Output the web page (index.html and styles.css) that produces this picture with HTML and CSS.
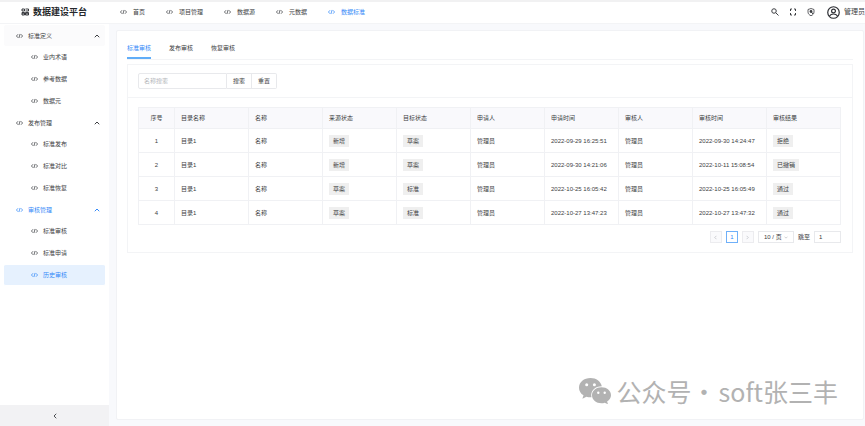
FILE: index.html
```html
<!DOCTYPE html>
<html lang="zh-CN">
<head>
<meta charset="utf-8">
<meta name="viewport" content="width=device-width, initial-scale=1">
<title>数据建设平台</title>
<link rel="stylesheet" href="styles.css">
</head>
<body>
<svg class="sprite" aria-hidden="true">
  <symbol id="code" viewBox="0 0 24 20"><path d="M7 4 1.500 10 7 16M17 4l5.500 6L17 16M14 3l-4 14" fill="none" stroke="currentColor" stroke-width="2.600"/></symbol>
  <symbol id="up" viewBox="0 0 12 8"><path d="M1.500 6.500 6 2l4.500 4.500" fill="none" stroke="currentColor" stroke-width="2"/></symbol>
  <symbol id="left" viewBox="0 0 8 12"><path d="M6.500 1.500 2 6l4.500 4.500" fill="none" stroke="currentColor" stroke-width="1.800"/></symbol>
  <symbol id="right" viewBox="0 0 8 12"><path d="M1.500 1.500 6 6l-4.500 4.500" fill="none" stroke="currentColor" stroke-width="1.800"/></symbol>
</svg>
<header class="header">
  <div class="brand">
    <svg class="brand-icon" viewBox="0 0 16 16" aria-hidden="true"><g fill="none" stroke="currentColor" stroke-width="1.800"><path d="M2 2h5v4H2zM9 2h6M9 6h6V2M2 9h5v5H2zM9 9h6v5H9zM2 11.500h5M9 11.500h6"/></g></svg>
    <h1 class="brand-name">数据建设平台</h1>
  </div>
  <nav class="nav" aria-label="主导航">
    <a href="#"><svg class="code"><use href="#code"/></svg>首页</a>
    <a href="#"><svg class="code"><use href="#code"/></svg>项目管理</a>
    <a href="#"><svg class="code"><use href="#code"/></svg>数据源</a>
    <a href="#"><svg class="code"><use href="#code"/></svg>元数据</a>
    <a href="#" class="active"><svg class="code"><use href="#code"/></svg>数据标准</a>
  </nav>
  <div class="tools">
    <button type="button" class="tool" aria-label="搜索"><svg viewBox="0 0 16 16"><g fill="none" stroke="currentColor" stroke-width="2"><circle cx="6" cy="6" r="4.500"/><path d="m9.500 9.500 5.500 5.500"/></g></svg></button>
    <button type="button" class="tool" aria-label="全屏"><svg viewBox="0 0 16 16"><path d="M3 6V2h3M10 2h3v4M13 10v4h-3M6 14H3v-4" fill="none" stroke="currentColor" stroke-width="2"/></svg></button>
    <button type="button" class="tool" aria-label="安全"><svg viewBox="0 0 16 16"><path d="M8 1 2 3v5c0 3.500 2.500 6 6 7.500 3.500-1.500 6-4 6-7.500V3z" fill="none" stroke="currentColor" stroke-width="1.600"/><circle cx="8" cy="7" r="2.800" fill="currentColor"/><path d="m8 7 4 5" stroke="currentColor" stroke-width="2"/></svg></button>
    <button type="button" class="user"><svg viewBox="0 0 26 26" aria-hidden="true"><g fill="none" stroke="currentColor" stroke-width="2.400"><circle cx="13" cy="13" r="11.500"/><circle cx="13" cy="10" r="3.800"/><path d="M5 20c2-3 5-4 8-4s6 1 8 4"/></g></svg>管理员</button>
  </div>
</header>
<div class="body">
  <aside class="sidebar">
    <nav class="menu" aria-label="侧边菜单">
      <button type="button" class="group first"><svg class="code"><use href="#code"/></svg><span>标准定义</span><svg class="up"><use href="#up"/></svg></button>
      <a href="#"><svg class="code"><use href="#code"/></svg>业内术语</a>
      <a href="#"><svg class="code"><use href="#code"/></svg>参考数据</a>
      <a href="#"><svg class="code"><use href="#code"/></svg>数据元</a>
      <button type="button" class="group"><svg class="code"><use href="#code"/></svg><span>发布管理</span><svg class="up"><use href="#up"/></svg></button>
      <a href="#"><svg class="code"><use href="#code"/></svg>标准发布</a>
      <a href="#"><svg class="code"><use href="#code"/></svg>标准对比</a>
      <a href="#"><svg class="code"><use href="#code"/></svg>标准恢复</a>
      <button type="button" class="group active"><svg class="code"><use href="#code"/></svg><span>审核管理</span><svg class="up"><use href="#up"/></svg></button>
      <a href="#"><svg class="code"><use href="#code"/></svg>标准审核</a>
      <a href="#"><svg class="code"><use href="#code"/></svg>标准申请</a>
      <a href="#" class="active current"><svg class="code"><use href="#code"/></svg>历史审核</a>
    </nav>
    <button type="button" class="collapse" aria-label="收起菜单"><svg><use href="#left"/></svg></button>
  </aside>
  <main class="content">
    <div class="page">
      <div class="tabs" role="tablist">
        <button type="button" role="tab" aria-selected="true" class="active">标准审核</button>
        <button type="button" role="tab" aria-selected="false">发布审核</button>
        <button type="button" role="tab" aria-selected="false">恢复审核</button>
      </div>
      <section class="panel">
        <form class="search">
          <input type="text" placeholder="名称搜索" aria-label="名称搜索">
          <button type="button">搜索</button>
          <button type="reset">重置</button>
        </form>
        <div class="panel-body">
          <table>
            <thead>
              <tr><th class="no">序号</th><th>目录名称</th><th>名称</th><th>来源状态</th><th>目标状态</th><th>申请人</th><th>申请时间</th><th>审核人</th><th>审核时间</th><th>审核结果</th></tr>
            </thead>
            <tbody>
              <tr><td class="no">1</td><td>目录1</td><td>名称</td><td><span class="tag">新增</span></td><td><span class="tag">草案</span></td><td>管理员</td><td>2022-09-29 16:25:51</td><td>管理员</td><td>2022-09-30 14:24:47</td><td><span class="tag">拒绝</span></td></tr>
              <tr><td class="no">2</td><td>目录1</td><td>名称</td><td><span class="tag">新增</span></td><td><span class="tag">草案</span></td><td>管理员</td><td>2022-09-30 14:21:06</td><td>管理员</td><td>2022-10-11 15:08:54</td><td><span class="tag">已撤销</span></td></tr>
              <tr><td class="no">3</td><td>目录1</td><td>名称</td><td><span class="tag">草案</span></td><td><span class="tag">标准</span></td><td>管理员</td><td>2022-10-25 16:05:42</td><td>管理员</td><td>2022-10-25 16:05:49</td><td><span class="tag">通过</span></td></tr>
              <tr><td class="no">4</td><td>目录1</td><td>名称</td><td><span class="tag">草案</span></td><td><span class="tag">标准</span></td><td>管理员</td><td>2022-10-27 13:47:23</td><td>管理员</td><td>2022-10-27 13:47:32</td><td><span class="tag">通过</span></td></tr>
            </tbody>
          </table>
          <div class="pager">
            <button type="button" class="page-btn" disabled aria-label="上一页"><svg><use href="#left"/></svg></button>
            <button type="button" class="page-btn on">1</button>
            <button type="button" class="page-btn" disabled aria-label="下一页"><svg><use href="#right"/></svg></button>
            <span class="size"><select aria-label="每页条数"><option>10 / 页</option></select><svg><use href="#up"/></svg></span>
            <label for="jump">跳至</label>
            <input id="jump" type="text" value="1">
          </div>
        </div>
      </section>
    </div>
  </main>
</div>
<div class="watermark">
  <svg viewBox="0 0 32 26" aria-hidden="true">
    <path d="M11.500 0C5 0 0 4.200 0 9.700c0 3.100 1.700 5.900 4.500 7.600L3.400 20.700l4-2c1.300.4 2.600.6 4.100.6h1C11 13 16 8.200 22.800 8.200 21.800 3.500 17.200 0 11.500 0z"/>
    <path d="M22.500 9.200c-5.300 0-9.500 3.500-9.500 8s4.200 8 9.500 8c1.100 0 2.200-.1 3.200-.5l3.300 1.600-.9-2.900c2.400-1.500 3.900-3.700 3.900-6.200 0-4.500-4.200-8-9.500-8z"/>
    <g class="eyes"><circle cx="7.700" cy="6.700" r="1.500"/><circle cx="15.400" cy="6.700" r="1.500"/><circle cx="19.300" cy="14.700" r="1.200"/><circle cx="25.700" cy="14.700" r="1.200"/></g>
  </svg>
  <span>公众号</span><span class="dot">·</span><span>soft张三丰</span>
</div>
</body>
</html>
```
FILE: styles.css
```css
* { box-sizing: border-box; }

body {
  margin: 0;
  height: 100vh;
  display: flex;
  flex-direction: column;
  overflow: hidden;
  background: #f8f9fc;
  color: #3c3e42;
  font: 6px/12px "Liberation Sans", "Noto Sans CJK SC", sans-serif;
}

button, input, select {
  margin: 0;
  padding: 0;
  border: 0;
  background: none;
  color: inherit;
  font: inherit;
}

a { color: inherit; text-decoration: none; }
svg { display: block; flex: none; }
.sprite { position: absolute; width: 0; height: 0; }
.code { width: 7px; height: 6px; }
.active { color: #3489f8; }

.header {
  flex: none;
  display: flex;
  align-items: center;
  height: 24px;
  padding-bottom: 1px;
  border-top: 2px solid #f1f1f2;
  border-bottom: 1px solid #f3f4f6;
  background: #fff;
  overflow: hidden;
}

.brand {
  display: flex;
  align-items: center;
  gap: 4px;
  width: 120px;
  padding-left: 21px;
  color: #26282c;
}
.brand-icon { width: 8px; height: 8px; }
.brand-name { margin: 0; font-size: 9px; line-height: 14px; font-weight: 700; }

.nav { display: flex; gap: 21px; }
.nav a { display: flex; align-items: center; gap: 6px; }

.tools { display: flex; align-items: center; gap: 10px; margin-left: auto; }
.tool svg { width: 8px; height: 8px; }
.tool:nth-child(3) { margin-right: 2px; }
.user {
  display: flex;
  align-items: center;
  gap: 4px;
  width: 38px;
  font-size: 7px;
  white-space: nowrap;
}
.user svg { width: 13px; height: 13px; color: #2c2e33; }

.body { flex: 1; display: flex; min-height: 0; }

.sidebar {
  flex: none;
  width: 109px;
  display: flex;
  flex-direction: column;
  justify-content: space-between;
  background: #fff;
}
.menu { display: flex; flex-direction: column; padding: 1px 4px; }
.menu a, .group {
  display: flex;
  align-items: center;
  height: 22px;
  gap: 5px;
  border-radius: 2px;
}
.menu a { padding-left: 27px; }
.group { height: 21px; padding: 0 5px 0 12px; text-align: left; }
.group span { flex: 1; }
.first { background: #fbfbfc; }
.up { width: 6px; height: 4px; }
.menu .current {
  border: solid #fff;
  border-width: 1px 0;
  background: #e6f1fe;
}
.collapse {
  display: flex;
  align-items: center;
  justify-content: center;
  height: 21px;
  background: #f2f2f4;
}
.collapse svg { width: 4px; height: 6px; }

.content { flex: 1; display: flex; min-width: 0; padding: 6px 1px 6px 7px; }
.page {
  flex: 1;
  min-width: 0;
  padding: 8px 10px;
  border: 1px solid #f1f2f5;
  border-radius: 2px;
  background: #fff;
}

.tabs { display: flex; gap: 18px; border-bottom: 1px solid #f3f4f6; }
.tabs button { height: 20px; border-bottom: 2px solid transparent; }
.tabs .active { border-color: #61adf8; }

.panel { margin-top: 4px; border: 1px solid #f3f4f6; }
.search { display: flex; padding: 8px 10px; border-bottom: 1px solid #f3f4f6; }
.search input, .search button { height: 16px; border: 1px solid #e8e9ec; }
.search input { width: 89px; padding: 0 5px; border-radius: 2px 0 0 2px; }
.search button { width: 25px; border-left: 0; }
.search button:last-child { border-radius: 0 2px 2px 0; }
::placeholder { color: #b4b6ba; opacity: 1; }

.panel-body { padding: 9px 11px 9px 10px; }
table {
  width: 100%;
  table-layout: fixed;
  border-collapse: separate;
  border-spacing: 0;
  border: solid #f0f1f4;
  border-width: 1px 0 0 1px;
}
th, td {
  height: 24px;
  padding: 0 6px;
  border: solid #f0f1f4;
  border-width: 0 1px 1px 0;
  text-align: left;
  font-weight: 400;
  white-space: nowrap;
}
th { height: 21px; background: #f9f9fc; }
.no { width: 36px; text-align: center; }
.tag {
  display: inline-block;
  padding: 0 4px;
  background: #efefef;
  vertical-align: middle;
}

.pager { display: flex; justify-content: flex-end; align-items: center; gap: 4px; margin-top: 6px; }
.page-btn {
  display: flex;
  align-items: center;
  justify-content: center;
  width: 12px;
  height: 12px;
  border: 1px solid #ececef;
  background: #fafafc;
  color: #b8bac0;
}
.page-btn svg { width: 3px; height: 5px; }
.page-btn.on { border-color: #6fb0f9; background: #fff; color: #3489f8; }
.size { display: flex; align-items: center; width: 36px; height: 12px; padding: 0 5px; border: 1px solid #e8e9ec; }
.size select { flex: 1; min-width: 0; appearance: none; }
.size svg { width: 4px; height: 3px; color: #b8bac0; transform: rotate(180deg); }
.pager input { width: 27px; height: 12px; padding: 0 4px; border: 1px solid #e8e9ec; }

.watermark {
  position: absolute;
  right: 27px;
  bottom: 17px;
  display: flex;
  align-items: center;
  color: #b2b2b2;
  font: 25px/36px "Noto Sans CJK SC", sans-serif;
}
.watermark svg { width: 32px; height: 26px; margin-right: 6px; fill: currentColor; }
.watermark .eyes { fill: #fff; }
.dot { width: 27px; }
```
